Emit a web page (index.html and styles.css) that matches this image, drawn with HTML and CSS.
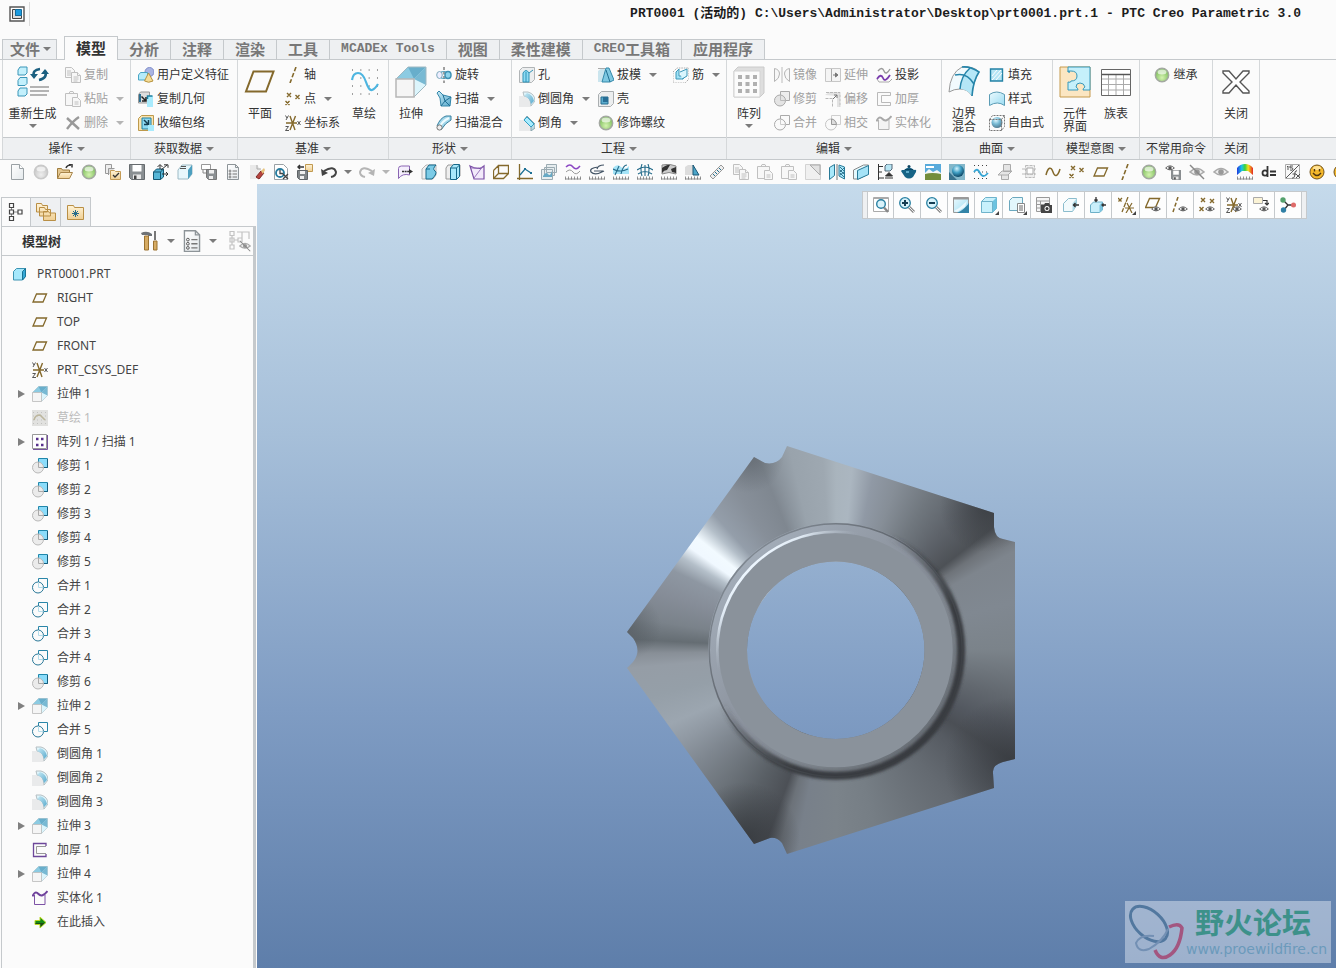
FILE: index.html
```html
<!DOCTYPE html>
<html lang="zh-CN">
<head>
<meta charset="utf-8">
<title>PRT0001 - PTC Creo Parametric 3.0</title>
<link rel="stylesheet" href="styles.css">
</head>
<body>
<svg class="sprite" aria-hidden="true">
<defs>
<linearGradient id="gBlue" x1="0" y1="0" x2="1" y2="1"><stop offset="0" stop-color="#ecfafe"/><stop offset="1" stop-color="#9bdcf2"/></linearGradient>
<linearGradient id="gDeep" x1="0" y1="0" x2="1" y2="1"><stop offset="0" stop-color="#c9ebf6"/><stop offset="1" stop-color="#5aaacd"/></linearGradient>
<linearGradient id="gGrey" x1="0" y1="0" x2="1" y2="1"><stop offset="0" stop-color="#fff"/><stop offset="1" stop-color="#e4e9ec"/></linearGradient>
<linearGradient id="gFold" x1="0" y1="0" x2="0" y2="1"><stop offset="0" stop-color="#fff3d6"/><stop offset="1" stop-color="#efcf94"/></linearGradient>
<linearGradient id="gRain" x1="0" y1="0" x2="1" y2="0"><stop offset="0" stop-color="#2036e0"/><stop offset=".3" stop-color="#19c8e6"/><stop offset=".5" stop-color="#3bd23b"/><stop offset=".7" stop-color="#f4e21d"/><stop offset="1" stop-color="#e32424"/></linearGradient>
<radialGradient id="gGreen" cx=".5" cy=".7" r=".6"><stop offset="0" stop-color="#d4f3b0"/><stop offset="1" stop-color="#7dbd5c"/></radialGradient>
<radialGradient id="gBall" cx=".5" cy=".7" r=".6"><stop offset="0" stop-color="#eee"/><stop offset="1" stop-color="#c6c6c6"/></radialGradient>
<radialGradient id="gSphere" cx=".4" cy=".3" r=".7"><stop offset="0" stop-color="#d5f3fd"/><stop offset=".5" stop-color="#3f9fc4"/><stop offset="1" stop-color="#0c4665"/></radialGradient>
</defs>
<symbol id="copy" viewBox="0 0 16 16"><g fill="#f7f7f7" stroke="#c0c0c0"><path d="M.5.5h6l3 3v7h-9z"/><path d="M2 4h4M2 6h4M2 8h4"/><path d="M6.500 5.500h6l3 3v7h-9z"/><path d="M12.500 5.500v3h3M8.500 10h5M8.500 12h5M8.500 14h4"/></g></symbol>
<symbol id="paste" viewBox="0 0 16 16"><g fill="#f7f7f7" stroke="#c0c0c0"><path d="M.5 2.500h12v12h-12z"/><path d="M4 2.500l1-2h3l1 2z"/><path d="M7.500 6.500h5l3 3v6h-8z"/><path d="M9.500 11h4M9.500 13h4"/></g></symbol>
<symbol id="cross" viewBox="0 0 16 16"><path d="M2 3l12 11M14 2C9 5 5 10 2 14" fill="none" stroke="#999" stroke-width="2.400"/></symbol>
<symbol id="udf" viewBox="0 0 16 16"><circle cx="11.500" cy="5" r="4.500" fill="#a9b4e2" stroke="#7f8cc9"/><path d="M.5 8l2-2.500h7V11l-2 2h-7z" fill="#b5ebfa" stroke="#4aa6c5"/><path d="M10.500 6L6.500 14q4 2.500 8.500 0z" fill="#f5dc98" stroke="#b6933f"/></symbol>
<symbol id="copygeo" viewBox="0 0 16 16"><path d="M.5 3.500l2-2.500h9v8l-2 3h-9z" fill="#ddd" stroke="#999"/><path d="M2 3v8" stroke="#2c6f90" stroke-width="2"/><path d="M3.500 5.500l4 4M8 6v4H4" fill="none" stroke="#222" stroke-width="1.500"/><path d="M9 5h6v11h-6z" fill="#a9ebfd"/><path d="M9.500 8V5h5" fill="none" stroke="#1c7fa0" stroke-width="1.500"/></symbol>
<symbol id="shrink" viewBox="0 0 16 16"><path d="M.5 3.500l3-3h12v12l-3 3h-12z" fill="#fae3b0" stroke="#bd9a4c"/><path d="M4 3h9v9l-2 2H4z" fill="#8edaf3" stroke="#2180a2"/><path d="M6 5l4 4M10.500 5v4.500H6" fill="none" stroke="#143c50" stroke-width="1.500"/><path d="M10 10h6v6h-6z" fill="#a9ebfd"/></symbol>
<symbol id="axis" viewBox="0 0 16 16"><path d="M11 0L5 16" stroke="#84692c" stroke-width="1.600" stroke-dasharray="4.500 2"/></symbol>
<symbol id="points" viewBox="0 0 16 16"><path d="M2 2l4 4M6 2L2 6M10.500 4l4 4M14.500 4l-4 4M.5 10l4 4M4.500 10l-4 4" stroke="#84692c" stroke-width="1.400"/></symbol>
<symbol id="csys" viewBox="0 0 16 16"><path d="M1 8h11M5 1l5 14M10.500 1L5 15" stroke="#84692c" stroke-width="1.400"/><path d="M.5 .500l1.500 2.500M3.500 .500L1 5M.5 11.500h3L.5 15.500H4M12.500 6l3 4M15.500 6l-3 4" fill="none" stroke="#444" stroke-width=".9"/></symbol>
<symbol id="plane" viewBox="0 0 16 16"><path d="M4.500 4h10L11 12H1z" fill="none" stroke="#84692c" stroke-width="1.300"/></symbol>
<symbol id="curve" viewBox="0 0 16 16"><path d="M1 11C3 3 6 2 8 8s5 4 7-3" fill="none" stroke="#84692c" stroke-width="1.500"/></symbol>
<symbol id="revolve" viewBox="0 0 16 16"><path d="M8 0v16" stroke="#444" stroke-dasharray="3 1.500"/><ellipse cx="3.500" cy="8" rx="2.800" ry="3.500" fill="#eef" stroke="#7eaabd"/><ellipse cx="12" cy="8" rx="3" ry="3.500" fill="#8ed4ec" stroke="#3d91b3" stroke-width="1.500"/><path d="M5 5q3-1 5 0M5 11q3 1 5 0" fill="none" stroke="#4a9dbb"/></symbol>
<symbol id="sweep" viewBox="0 0 16 16"><path d="M1 2l2-2 4 4 8 2-1 9H5L4 7z" fill="url(#gDeep)" stroke="#3386aa"/><path d="M7 4l2 6-4 5M9 10l6-4M9 10l5 5" fill="none" stroke="#1f6f94"/></symbol>
<symbol id="blend" viewBox="0 0 16 16"><path d="M1 11Q4 3 10 1l5 0v4Q9 8 5 15z" fill="#a3d8eb" stroke="#367f9f"/><path d="M3 13Q6 6 13 3" fill="none" stroke="#eefbff" stroke-width="2"/><circle cx="3.500" cy="12.500" r="2.600" fill="#eee" stroke="#777"/></symbol>
<symbol id="hole" viewBox="0 0 16 16"><path d="M.5 3.500l3-3h12v12l-3 3h-12z" fill="#eceeef" stroke="#b0b4b6"/><path d="M4 15V6q3-5 6 0v9z" fill="#8edaf3" stroke="#2e92b6"/><path d="M10 6l4-3M7 5v10" stroke="#2e92b6"/></symbol>
<symbol id="round" viewBox="0 0 16 16"><path d="M0 5h5q7 2 7 11H0z" fill="#e9eaeb"/><path d="M4 1h5q7 2 7 9l-4 5Q12 6 5 5z" fill="#dff5fc" stroke="#b5bfc3"/><path d="M8 2q6 2 7 8l-3 3Q11 7 5 5z" fill="url(#gDeep)"/></symbol>
<symbol id="chamfer" viewBox="0 0 16 16"><path d="M0 5h5l7 7v4H0z" fill="#e9eaeb"/><path d="M5 5l3-4 8 8v4l-4 3v-4z" fill="#b9dbe6" stroke="#8aa5ae"/><path d="M5 5l3-3 7 7-3 3z" fill="#a8ecff" stroke="#32a0c5"/></symbol>
<symbol id="draft" viewBox="0 0 16 16"><path d="M0 4l4-3h7v10l-3 4H0z" fill="#cbe5ee"/><path d="M0 1.500h7" stroke="#aaa"/><path d="M8 1l3 0 5 12-4 2H4z" fill="#7fc8e1" stroke="#3489aa"/><path d="M8 3l4 12" stroke="#246f91"/></symbol>
<symbol id="shell" viewBox="0 0 16 16"><path d="M.5 3.500l3-3h12v12l-3 3h-12z" fill="#eceeef" stroke="#aaaeb0"/><path d="M3 6h7v7H3z" fill="#5baccd" stroke="#266f91"/><path d="M5 6h5v5H5z" fill="#276e96"/></symbol>
<symbol id="rib" viewBox="0 0 16 16"><path d="M0 5l4-4h12v11l-4 4H0z" fill="none" stroke="#aaa" stroke-dasharray="1.500 1"/><path d="M3 5l3-3v7h7l-3 3H3z" fill="#9fe1f5" stroke="#3d97b8"/><path d="M7 5l7-3v7l-5 3" fill="#d8f5fd" stroke="#3d97b8"/></symbol>
<symbol id="green" viewBox="0 0 16 16"><circle cx="8" cy="8" r="6.700" fill="url(#gGreen)" stroke="#a3a8a1" stroke-width="1.400"/><ellipse cx="8" cy="5" rx="4.500" ry="2.500" fill="#fff" opacity=".65"/></symbol>
<symbol id="grey" viewBox="0 0 16 16"><circle cx="8" cy="8" r="6.700" fill="url(#gBall)" stroke="#c9c9c9" stroke-width="1.400"/><ellipse cx="8" cy="5" rx="4.500" ry="2.500" fill="#fff" opacity=".65"/></symbol>
<symbol id="mirror" viewBox="0 0 16 16"><path d="M.5 1.500q5 1 5 5.500t-5 7.500zM15.500 1.500q-5 1-5 5.500t5 7.500z" fill="#f7f7f7" stroke="#b5b5b5"/><path d="M8 0v16" stroke="#bbb"/></symbol>
<symbol id="trimoff" viewBox="0 0 16 16"><path d="M6.500.5h9v9h-9z" fill="#ededed" stroke="#aaa"/><circle cx="6" cy="9.500" r="5.500" fill="#e4e4e4" stroke="#aaa"/><path d="M6.500 4v5.500h5" fill="none" stroke="#bbb"/></symbol>
<symbol id="mergeoff" viewBox="0 0 16 16"><path d="M6.500.5h9v9h-9z" fill="#fafafa" stroke="#aaa"/><circle cx="6" cy="9.500" r="5.500" fill="#fafafa" stroke="#aaa"/><path d="M6.500 4v5.500h5" fill="none" stroke="#ccc"/></symbol>
<symbol id="interoff" viewBox="0 0 16 16"><path d="M6.500.5h9v9h-9z" fill="#fafafa" stroke="#cfcfcf"/><circle cx="6" cy="9.500" r="5.500" fill="#fafafa" stroke="#c4c4c4"/><path d="M6.500 4v5.500h5q-1-5-5-5.500z" fill="#ddd" stroke="#999"/></symbol>
<symbol id="extend" viewBox="0 0 16 16"><path d="M.5 1.500h15v13h-15z" fill="#f4f4f4" stroke="#c7c7c7"/><path d="M6.500 2v12" stroke="#aaa"/><path d="M8 8h4M10.500 6L13 8l-2.500 2z" fill="#777" stroke="#777"/></symbol>
<symbol id="offset" viewBox="0 0 16 16"><path d="M0 4l4-3h11v15h-3V5z" fill="#e3e3e3"/><path d="M.5 7.500h7V16M1 1.500h14V16" fill="none" stroke="#b8b8b8" stroke-dasharray="3 1"/><path d="M8 8l4-4M9 4h3v3" fill="none" stroke="#777"/></symbol>
<symbol id="thickoff" viewBox="0 0 16 16"><path d="M14.500 1.500h-13v13h13v-3h-9v-7h9z" fill="#fafafa" stroke="#b9b9b9"/></symbol>
<symbol id="thick" viewBox="0 0 16 16"><path d="M14 4.500H4.500v7H14" fill="none" stroke="#999"/><path d="M14 4V1.500H1.500v13H14V12" fill="none" stroke="#6d479a" stroke-width="1.300"/></symbol>
<symbol id="project" viewBox="0 0 16 16"><path d="M2 4q4-5 6 0t6-2" fill="none" stroke="#9a9a9a" stroke-width="1.400"/><path d="M1 12l2 3h10l3-3" fill="none" stroke="#aaa"/><path d="M1 12q4-6 6-1t7-3" fill="none" stroke="#7a3cae" stroke-width="1.800"/></symbol>
<symbol id="solidoff" viewBox="0 0 16 16"><path d="M2.500 5v9.500h10.500V5" fill="#f3f3f3" stroke="#b5b5b5"/><path d="M.5 6.500Q3 0 6.500 4t9-3" fill="none" stroke="#a8a8a8" stroke-width="2"/></symbol>
<symbol id="solid" viewBox="0 0 16 16"><path d="M2.500 5v9.500h10.500V5" fill="none" stroke="#7d52a6"/><path d="M.5 6.500Q3 0 6.500 4t9-3" fill="none" stroke="#6f429c" stroke-width="2"/></symbol>
<symbol id="fill" viewBox="0 0 16 16"><path d="M1.500 2h12v12h-12z" fill="#b5e5f5" stroke="#2583a6" stroke-width="1.400"/><path d="M3 9l5-6M3 13l9-10M7 13l6-7" stroke="#fff"/></symbol>
<symbol id="style" viewBox="0 0 16 16"><path d="M.5 3.500q7-5 15 0v11q-7-5-15 0z" fill="url(#gBlue)" stroke="#5b9cb5"/></symbol>
<symbol id="free" viewBox="0 0 16 16"><circle cx="8" cy="7.500" r="5.500" fill="url(#gSphere)" opacity=".7"/><path d="M.5 4.500l3-4h12v11l-3 4H.5zM.5 4.500h12v11M12.500 4.500l3-4" fill="none" stroke="#777" stroke-dasharray="2 1"/></symbol>
<symbol id="extrude" viewBox="0 0 32 32"><path d="M1 13L13 1h18v18L19 31" fill="#dcf5fc"/><path d="M1 13L13 1h18L19 13z" fill="#8ccbe2"/><path d="M13 1h18L19 13z" fill="#68aecb"/><path d="M19 13L31 1v18z" fill="#78b9d3"/><path d="M1 13L13 1h18v18L19 31" fill="none" stroke="#9fb9c3"/><path d="M1 13h18v18H1z" fill="#f5f5f5" stroke="#b6b6b6" stroke-width="1.500"/></symbol>
<symbol id="regen" viewBox="0 0 32 32"><g fill="#c3f0fc" stroke="#3a96b8"><path d="M1 4l2-3h7v6L8 9H1zM1 14.500l2-3h7v6L8 19.500H1zM1 25l2-3h7v6L8 30H1z"/></g><path d="M13 21h19M13 25h19M13 29h17" stroke="#9d9d9d" stroke-width="1.600"/><path d="M23 3Q15 4 17 10M22 14q9-2 6-9" fill="none" stroke="#1b5f80" stroke-width="2.600"/><path d="M13 8h8l-4 5zM24 8h8l-4-5z" fill="#1b5f80"/></symbol>
<symbol id="bigplane" viewBox="0 0 32 32"><path d="M9.500 5.500h20L22 25.500H2z" fill="none" stroke="#84692c" stroke-width="2"/></symbol>
<symbol id="sketch" viewBox="0 0 32 32"><path d="M4 4h26M4 28h26M4 12h26M4 20h26" stroke="#444" stroke-dasharray="1 7.330"/><path d="M4 14Q5 7 10 7t8 9 6 8 6-6" fill="none" stroke="#4db5e0" stroke-width="2.200"/></symbol>
<symbol id="pattern" viewBox="0 0 32 32"><path d="M1 5l4-4h26v26l-4 4H1z" fill="#dedede" stroke="#cacaca"/><path d="M1 5h26v26H1z" fill="#fbfbfb" stroke="#d3d3d3"/><path d="M5 11h19M5 18h19M5 25h19" stroke="#b0b0b0" stroke-width="4" stroke-dasharray="4 3.500"/></symbol>
<symbol id="boundary" viewBox="0 0 32 32"><path d="M1 26Q2 7 14 1q12-1 17 5-6 9-7 24-4-7-12-7-6 0-11 3z" fill="#f1fafd" stroke="#999"/><path d="M22 2q6 1 9 4-6 9-7 24-4-6-11-7Q13 10 22 2z" fill="#b5e7f7"/><path d="M14 1Q22 0 31 6q-6 9-7 24" fill="none" stroke="#2585aa" stroke-width="1.600"/><path d="M22 2Q13 10 12 23M7 9q12-3 19 9" fill="none" stroke="#2585aa" stroke-width="1.500"/></symbol>
<symbol id="component" viewBox="0 0 32 32"><path d="M1 1h30v30H1z" fill="#fbe6c2" stroke="#c59a4d"/><path d="M9 1h22v23h-7q0-2 2-3-1-4-5-4t-4 4q2 1 2 3H9v-8q3 1 3-1 6 0 6-5t-6-5-1 1H9z" fill="#c5f0fb" stroke="#3698bb"/></symbol>
<symbol id="table" viewBox="0 0 32 32"><path d="M1.500 3.500h29v26h-29z" fill="#fff" stroke="#666"/><path d="M2 13h28M2 18.500h28M2 24h28M8.500 9v20M16 9v20M23.500 9v20" stroke="#aaa"/><path d="M2 8.500h28" stroke="#555" stroke-width="1.500"/></symbol>
<symbol id="close" viewBox="0 0 32 32"><path d="M3 5h6l7 8 7-8h6v2l-9 9 9 9v2h-6l-7-8-7 8H3v-2l9-9-9-9z" fill="#fff" stroke="#555" stroke-width="1.400"/></symbol>
<symbol id="new" viewBox="0 0 16 16"><path d="M2.500.5h8l4 4v11h-12z" fill="url(#gGrey)" stroke="#9aa1a5"/><path d="M10.500.5v4h4" fill="#fff" stroke="#9aa1a5"/></symbol>
<symbol id="open" viewBox="0 0 16 16"><path d="M.5 14.500v-10h4l1 1.500h7v3" fill="#e3c68f" stroke="#9e7b3c"/><path d="M.5 14.500l3-6h12l-3 6z" fill="url(#gFold)" stroke="#a8854a"/><path d="M9 4q1-3 5-3M12 0h3v3.500" fill="none" stroke="#333" stroke-width="1.500"/></symbol>
<symbol id="folders" viewBox="0 0 16 16"><path d="M.5.5h6v9h-6z" fill="#eee" stroke="#999"/><path d="M3.500 11V4.500h6" fill="#ddd" stroke="#999"/><path d="M5.500 15.500v-9h4l1 1h5v8z" fill="url(#gFold)" stroke="#c49b55"/><path d="M8 11l2 2 4-4" fill="none" stroke="#333" stroke-width="1.300"/></symbol>
<symbol id="save" viewBox="0 0 16 16"><path d="M.5.5h15v15h-13l-2-2z" fill="#8a8f92" stroke="#666b6e"/><path d="M3.500 1h9v6.500h-9z" fill="#fff"/><path d="M4 10.500h8V15H4z" fill="#e8e8e8"/><path d="M5 11.500h2.500V15H5z" fill="#444"/></symbol>
<symbol id="movebox" viewBox="0 0 16 16"><path d="M.5 8l3-3h7v8l-3 2.500h-7z" fill="#56b6d6" stroke="#145772"/><path d="M.5 8h7v7.500M7.500 8l3-3" fill="none" stroke="#145772"/><path d="M7 5V1M4.500 3L7 .5 9.500 3M8 6l6-5M11 .8h4v3M9 10h6M13 8l2 2-2 2" fill="none" stroke="#333"/></symbol>
<symbol id="mesh" viewBox="0 0 16 16"><path d="M1 6l4-5h10v9l-4 5H1z" fill="#e7f7fc" stroke="#9dbac5"/><path d="M11 6l4-5v9l-4 5z" fill="#4c9fbf"/><path d="M3 4l1 1 1-1 1 1 1-1 1 1 1-1M4 2l1 1 1-1 1 1 1-1 1 1" fill="none" stroke="#555"/></symbol>
<symbol id="savecopy" viewBox="0 0 16 16"><path d="M.5.5h9v5h-9z" fill="#fff" stroke="#999"/><path d="M2 6v3h3" fill="none" stroke="#888"/><path d="M5.500 5.500h10v10h-8l-2-2z" fill="#8b8f92" stroke="#777"/><path d="M8 6h5v3.500H8zM8 12h4v3H8z" fill="#eee"/></symbol>
<symbol id="list" viewBox="0 0 16 16"><path d="M2.500.5h8l3 3v12h-11z" fill="url(#gGrey)" stroke="#8d9498"/><path d="M10.500.5v3h3" fill="none" stroke="#8d9498"/><g fill="none" stroke="#555" stroke-width=".7"><circle cx="5" cy="7" r="1"/><circle cx="5" cy="10" r="1"/><circle cx="5" cy="13" r="1"/></g><path d="M7.500 7H12M7.500 10H12M7.500 13H12" stroke="#777"/></symbol>
<symbol id="erase" viewBox="0 0 16 16"><path d="M1 1h7l4 5v9H1z" fill="#e9e9e9"/><path d="M8 1v4h4" fill="none" stroke="#aaa"/><path d="M7 13l5-6 3 2-5 6z" fill="#b8443e" stroke="#7c2926"/><path d="M12 7l3-3 1 2-2 4z" fill="#e8c47e"/></symbol>
<symbol id="preview" viewBox="0 0 16 16"><path d="M1.500.5h9l4 4v11h-13z" fill="#fff" stroke="#9aa1a5"/><circle cx="7" cy="9" r="4" fill="none" stroke="#267c9f" stroke-width="1.800"/><path d="M7 6v3.500h3M10 10l5 5M15 10l-5 5" fill="none" stroke="#444" stroke-width="1.300"/></symbol>
<symbol id="backup" viewBox="0 0 16 16"><path d="M1 3h6M3 1L1 3l2 2" fill="none" stroke="#333" stroke-width="1.500"/><path d="M8.500.5h7v7h-7z" fill="url(#gFold)" stroke="#c19a50"/><path d="M.5 6.500h10v9h-8l-2-2z" fill="#7f8487" stroke="#5e6366"/><path d="M3 7h5v3H3zM3 12h4v3H3z" fill="#eee"/></symbol>
<symbol id="undo" viewBox="0 0 16 16"><path d="M3 7q10-6 12 1 0 4-5 5" fill="none" stroke="#444" stroke-width="2"/><path d="M0 5l1 7 6-3z" fill="#444"/></symbol>
<symbol id="redo" viewBox="0 0 16 16"><path d="M13 7Q3 1 1 8q0 4 5 5" fill="none" stroke="#b5b5b5" stroke-width="2"/><path d="M16 5l-1 7-6-3z" fill="#b5b5b5"/></symbol>
<symbol id="sheet" viewBox="0 0 16 16"><path d="M1.500 14.500v-10q0-2.500 3-2.500h8v9q-7-2-11 3.500z" fill="#f4eefc" stroke="#8a65b3"/><path d="M5 7.500h8" stroke="#333" stroke-width="1.600" stroke-dasharray="2 .6"/><path d="M12 5l4 2.500-4 2.500z" fill="#333"/></symbol>
<symbol id="cut" viewBox="0 0 16 16"><path d="M1 5l4-4h10v10l-3 4H1z" fill="#f0f0f0" stroke="#b5b5b5"/><path d="M5 5l3-4h7q-4 4-1 6t-3 8H5V5h4" fill="#7ccbe6" stroke="#17698a"/></symbol>
<symbol id="slab" viewBox="0 0 16 16"><path d="M1 4l2-3h12v11l-3 3H1z" fill="#eee" stroke="#999"/><path d="M5.500 4l3-3.500h6v12l-3 3h-6z" fill="#a9e9fb" stroke="#17698a"/><path d="M5.500 4h6v11.500M11.500 4l3-3" fill="none" stroke="#17698a"/></symbol>
<symbol id="purple" viewBox="0 0 16 16"><path d="M1 2q9 5 14 0v13H5z" fill="#f2eafa" stroke="#7a4fa5" stroke-width="1.200"/><path d="M14 2L5 14M2 4l8 0" stroke="#9a76bd"/></symbol>
<symbol id="frame" viewBox="0 0 16 16"><path d="M5.500 1.500h10v8h-10zM.5 6.500l5-5M.5 6.500v8h10l5-5M.5 14.500l5-5" fill="none" stroke="#84692c" stroke-width="1.300"/></symbol>
<symbol id="graph" viewBox="0 0 16 16"><path d="M2.500 0v16M0 14.500h16" stroke="#84692c" stroke-width="1.300"/><path d="M3 11l5-6 6 4" fill="none" stroke="#1c6f94" stroke-width="1.300"/><path d="M7 4h2v2H7zM13 8h2v2h-2z" fill="#1c6f94"/></symbol>
<symbol id="stack" viewBox="0 0 16 16"><path d="M5.500.5h10v8h-10zM3.500 3.500h10v8h-10zM.5 5.500h11v10H.5z" fill="#e6edef" stroke="#9babb2"/><path d="M2 12q3-5 5-2t4-3v6H2z" fill="#67a9c4"/></symbol>
<symbol id="ruler" viewBox="0 0 16 16"><path d="M0 15h16M.5 12.500v3M3.500 12.500v3M6.500 12.500v3M9.500 12.500v3M12.500 12.500v3M15.500 12.500v3" stroke="#777" stroke-width=".8"/></symbol>
<symbol id="wave" viewBox="0 0 16 16"><use href="#ruler"/><path d="M1 3q4-4 7 0t7-1" fill="none" stroke="#8c48c4" stroke-width="1.500"/><path d="M1 8q4-4 7 0t7-1" fill="none" stroke="#999"/></symbol>
<symbol id="radius" viewBox="0 0 16 16"><use href="#ruler"/><path d="M15 1q-6 0-7 4M9 3Q0 4 2 8q4 4 13-1M5 7h9" fill="none" stroke="#456" stroke-width="1.200"/></symbol>
<symbol id="flow" viewBox="0 0 16 16"><use href="#ruler"/><path d="M0 4q4-5 8-1t8-1v8H0z" fill="#a6e4f7"/><path d="M2 11L6 2M8 10q2-9 6-9M0 5q7 4 15 0" fill="none" stroke="#256c8b" stroke-width="1.100"/></symbol>
<symbol id="net" viewBox="0 0 16 16"><use href="#ruler"/><path d="M0 6q8-6 16 0M1 10q7-5 14 0M5 0q-2 5 0 12M11 0q2 5 0 12M8 1v11" fill="none" stroke="#256c8b" stroke-width="1.100"/></symbol>
<symbol id="zebra" viewBox="0 0 16 16"><use href="#ruler"/><path d="M1 1q7-2 14 1v8q-7-3-14 0z" fill="#ccc" stroke="#888"/><path d="M1 4q6-4 8-3L6 6q-3 0-5 3zM10 5l5-2v6l-4-1z" fill="#333"/></symbol>
<symbol id="draftchk" viewBox="0 0 16 16"><use href="#ruler"/><path d="M0 3l3-2h6v10H0z" fill="#ddd"/><path d="M8 11V1l6 10z" fill="#4ca6ca" stroke="#1b5675"/></symbol>
<symbol id="measure" viewBox="0 0 16 16"><path d="M1 12L12 1l3 3L4 15z" fill="#eee" stroke="#999"/><path d="M4 10l2 2M6 8l2 2M8 6l2 2M10 4l2 2" stroke="#25708f"/></symbol>
<symbol id="corner" viewBox="0 0 16 16"><path d="M.5.5h15v15H.5z" fill="#f0f0f0" stroke="#d3d3d3"/><path d="M5 1l10 10V1z" fill="#e2e2e2" stroke="#aaa"/></symbol>
<symbol id="mirror2" viewBox="0 0 16 16"><path d="M.5 3.500l5-3v11l-5 4zM10 1l5.500 2v12L10 12z" fill="#a9e9fb" stroke="#287997"/><path d="M8 0v16" stroke="#777"/><path d="M11 3l4 4M11 6l4 4M11 9l4 4M15 4l-4 4M15 8l-4 3" stroke="#175b79" stroke-width=".8"/></symbol>
<symbol id="thinbox" viewBox="0 0 16 16"><path d="M.5 6l10-5h5v9l-10 5h-5z" fill="#e4f8fd" stroke="#888"/><path d="M4.500 6.500l11-5v9l-11 5z" fill="#a5e3f7" stroke="#287997"/></symbol>
<symbol id="levels" viewBox="0 0 16 16"><path d="M1.500 0v16M1 2.500h5M1 8h4M1 14h6" stroke="#333"/><path d="M8 2l2-2h5v5l-2 2H8z" fill="#b7e5f3" stroke="#567"/><path d="M12 8.500l3.500 3.500h-7zM8 14h8" fill="#333" stroke="#333"/></symbol>
<symbol id="teapot" viewBox="0 0 16 16"><path d="M3 6q5-5 10 0 3-1 2 2l-3 5q-4 3-8 0L0 7l1-1z" fill="#176486"/><circle cx="8" cy="2.500" r="1.500" fill="#0d4562"/><path d="M4 5.500h8" stroke="#0d4562"/><path d="M5 8h3" stroke="#78c3df" stroke-width="1.500"/></symbol>
<symbol id="scene" viewBox="0 0 16 16"><path d="M0 0h16v16H0z" fill="#58aadb"/><path d="M0 9l4-4 4 3 4-2 4 3v3H0z" fill="#f3f7f6"/><path d="M0 10q7-2 16 0v6H0z" fill="#738d3b"/><path d="M1 3h8" stroke="#fff" stroke-width="2"/></symbol>
<symbol id="sphere" viewBox="0 0 16 16"><path d="M0 0h16v16H0z" fill="#83b7ca"/><path d="M0 8l8 8H0z" fill="#39728d"/><circle cx="9" cy="7" r="6" fill="url(#gSphere)"/></symbol>
<symbol id="sketchs" viewBox="0 0 16 16"><path d="M1 1.500h15M1 14.500h15M1 8h15" stroke="#444" stroke-dasharray="1 3"/><path d="M1 8q3-5 6 1t8 0" fill="none" stroke="#38a6d4" stroke-width="1.800"/></symbol>
<symbol id="section" viewBox="0 0 16 16"><path d="M6.500.5h7v7h-7zM1 11l4-4h10l-4 4zM4.500 11v4.500h7v-5" fill="#e5e5e5" stroke="#aaa"/></symbol>
<symbol id="clip" viewBox="0 0 16 16"><path d="M4.500 1.500h9v12h-9zM1 5h14M1 10h14" fill="#eee" stroke="#bbb" stroke-dasharray="3 1"/><path d="M6 4h6v6H6z" fill="#fff" stroke="#aaa"/></symbol>
<symbol id="eye" viewBox="0 0 16 16"><path d="M1 8q7-7 14 0-7 6-14 0z" fill="#fff" stroke="#666" stroke-width="1.600"/><circle cx="8" cy="8" r="2.800" fill="#555"/></symbol>
<symbol id="eyeg" viewBox="0 0 16 16"><path d="M1 8q7-7 14 0-7 6-14 0z" fill="#eee" stroke="#aaa" stroke-width="1.600"/><circle cx="8" cy="8" r="2.800" fill="#999"/></symbol>
<symbol id="eyeoff" viewBox="0 0 16 16"><use href="#eyeg"/><path d="M1 1l14 14" stroke="#888" stroke-width="1.400"/></symbol>
<symbol id="eyesave" viewBox="0 0 16 16"><use href="#save" x="6" y="6" width="10" height="10"/><use href="#eye" x="0" y="-1" width="10" height="10"/></symbol>
<symbol id="rainbow" viewBox="0 0 16 16"><path d="M0 11V4q3-4 8-4t8 4v7l-5-4H5z" fill="url(#gRain)"/><use href="#ruler"/></symbol>
<symbol id="relation" viewBox="0 0 16 16"><path d="M6.500 2v11M6.500 9a2.500 2.700 0 1 0-5 0 2.500 2.700 0 1 0 5 0M9 7.500h6M9 11h6" fill="none" stroke="#333" stroke-width="1.800"/></symbol>
<symbol id="fx" viewBox="0 0 16 16"><path d="M.5.5h14v14H.5z" fill="#f8f8f8" stroke="#aaa"/><path d="M14 1L1 14M2 3l1-1v4M8 2H5v2q3-1 3 1T5 6M7 14q3 1 3-6 1-2 2-1M7.500 10H11M11 10l4 4M15 10l-4 4" fill="none" stroke="#444" stroke-width=".9"/></symbol>
<symbol id="smile" viewBox="0 0 16 16"><circle cx="8" cy="8" r="7" fill="#f4b82b" stroke="#71521b"/><ellipse cx="8" cy="4" rx="4" ry="2" fill="#ffe294"/><path d="M5.500 5v2.500M10.500 5v2.500M4 9q4 5 8 0" fill="none" stroke="#503710" stroke-width="1.400"/></symbol>
<symbol id="part" viewBox="0 0 16 16"><path d="M1.500 5.500l3-3h9v8l-3 3.500h-9z" fill="#a5e8fc" stroke="#3c93b2"/><path d="M10.500 5.500l3-3v8l-3 3.500z" fill="#35a8d6" stroke="#187497"/></symbol>
<symbol id="sketchhid" viewBox="0 0 16 16"><path d="M0 0h16v16H0z" fill="#e1e1df"/><path d="M1 2.500h15M1 6h15M1 10h15M1 13.500h15" stroke="#c1c1bf" stroke-dasharray="1 3"/><path d="M2 10Q3 5 8 5l5 5" fill="none" stroke="#bcb69d" stroke-width="1.600"/></symbol>
<symbol id="patt" viewBox="0 0 16 16"><path d="M.5.5h14v14H.5z" fill="#fff" stroke="#999"/><path d="M15.500 1v14.500H1" fill="none" stroke="#77549d"/><path d="M4 5h7.500M4 11h7.500" stroke="#57308c" stroke-width="2.500" stroke-dasharray="2.500 2.500"/></symbol>
<symbol id="trim" viewBox="0 0 16 16"><path d="M6.500.5h9v9h-9z" fill="#8bdcfa" stroke="#2088ac"/><path d="M15.500 1v8.500H12" fill="none" stroke="#165d7c"/><circle cx="6" cy="9.500" r="5.500" fill="#ebebeb" stroke="#b9b9b9"/><path d="M6.500 4v5.500h5" fill="none" stroke="#aaa"/></symbol>
<symbol id="merge" viewBox="0 0 16 16"><path d="M6.500.5h9v9h-9z" fill="#fbfbfb" stroke="#2a86a8"/><circle cx="6" cy="9.500" r="5.500" fill="#fbfbfb" stroke="#2a7898"/><path d="M6.500 4v5.500h5" fill="none" stroke="#b4dcea"/></symbol>
<symbol id="insert" viewBox="0 0 16 16"><path d="M3 6.500h5V3l6 5.500L8 14v-3.500H3z" fill="#168b16" stroke="#b8d820"/><path d="M3.500 9h9L8.500 13v-3h-5z" fill="#1f4a14"/></symbol>
<symbol id="nodes" viewBox="0 0 16 22"><path d="M3.500 3v16M4 11h7" stroke="#888"/><path d="M1.500 2.500h4v4h-4zM1.500 9h4v4h-4zM1.500 15.500h4v4h-4zM10 9h4v4h-4z" fill="#fff" stroke="#444" stroke-width="1.200"/></symbol>
<symbol id="nodesoff" viewBox="0 0 22 22"><path d="M1 1.500h4v4H1zM1 8h4v4H1zM1 15h4v4H1zM9 8h4v4H9zM3 5v10M5 10h4M8 2h12v7M13 2v6" fill="none" stroke="#c3c3c3" stroke-width="1.200"/><use href="#eyeoff" x="10" y="10" width="12" height="12"/></symbol>
<symbol id="layers" viewBox="0 0 22 22"><g fill="url(#gFold)" stroke="#b98f45"><path d="M1.500 11V2.500h5l1 2h5V11zM4.500 15V6.500h5l1 2h5V15zM8.500 19.500v-9h5l1 1.500h6v7.500z"/></g></symbol>
<symbol id="star" viewBox="0 0 22 22"><path d="M2.500 18.500v-14h6l1 2h9v12z" fill="url(#gFold)" stroke="#b98f45"/><path d="M10.500 9v7M7 12.500h7M8 10l5 5M13 10l-5 5" stroke="#276c8a"/></symbol>
<symbol id="tools" viewBox="0 0 22 22"><path d="M2 3q6-3 11 1v2H9V5H3z" fill="#6e7276"/><path d="M5.500 6h4v14h-4z" fill="#d6ab63" stroke="#9b7230"/><path d="M16 1v9" stroke="#777" stroke-width="2"/><path d="M14.500 11h3.500v9h-3.500z" fill="#d6ab63" stroke="#9b7230"/></symbol>
<symbol id="zoomfit" viewBox="0 0 16 16"><path d="M.5.500h15v14H.5z" fill="#fff" stroke="#aaa"/><path d="M1 1.500h14" stroke="#aaa"/><circle cx="8" cy="7" r="4.300" fill="#d9f3fb" stroke="#2980a2" stroke-width="1.400"/><path d="M11 10.500l4 4.500" stroke="#888" stroke-width="2.400"/></symbol>
<symbol id="zoomin" viewBox="0 0 16 16"><circle cx="6" cy="6" r="5.300" fill="#d9f3fb" stroke="#2980a2" stroke-width="1.300"/><path d="M6 3v6M3 6h6" stroke="#143d53" stroke-width="2"/><path d="M10 10l5 5" stroke="#888" stroke-width="3"/><path d="M10 10l5 5" stroke="#eee"/></symbol>
<symbol id="zoomout" viewBox="0 0 16 16"><circle cx="6" cy="6" r="5.300" fill="#d9f3fb" stroke="#2980a2" stroke-width="1.300"/><path d="M3 6h6" stroke="#143d53" stroke-width="2"/><path d="M10 10l5 5" stroke="#888" stroke-width="3"/><path d="M10 10l5 5" stroke="#eee"/></symbol>
<symbol id="repaint" viewBox="0 0 16 16"><path d="M.5.5h15v15H.5z" fill="url(#gBlue)" stroke="#999"/><path d="M16 6v10H4q7-3 12-10z" fill="#3384a7"/><path d="M1 1.500h14" stroke="#999" stroke-width="2"/><path d="M1 14l5-3 8-7-2 6-8 5z" fill="#fff" opacity=".7"/></symbol>
<symbol id="shade" viewBox="0 0 16 16"><path d="M.5 4.500l4-4h11v11l-4 4H.5z" fill="#c8f1fc" stroke="#6fb3cb"/><path d="M11.500 4.500l4-4v11l-4 4z" fill="#6cc3e0"/><path d="M.5 4.500h11v11" fill="none" stroke="#6fb3cb"/></symbol>
<symbol id="views" viewBox="0 0 16 16"><path d="M.5 3.500l3-3h10v10l-3 3H.5z" fill="#e3f7fc" stroke="#6ba8be"/><path d="M8.500 6.500h7v9h-7z" fill="#fff" stroke="#888"/><path d="M10 9h4M10 11h4M10 13h4" stroke="#666"/></symbol>
<symbol id="camera" viewBox="0 0 16 16"><path d="M.5.5h13v14H.5zM1 4h12M1 7.500h12M1 11h12M4.500 4v10" fill="#f6f6f6" stroke="#999"/><path d="M5 8h3l1-2h4l1 2h2v8H5z" fill="#444"/><circle cx="11" cy="11.500" r="2.500" fill="#fff"/><circle cx="11" cy="11.500" r="1.500" fill="#333"/></symbol>
<symbol id="persp" viewBox="0 0 16 16"><path d="M.5 6.500l5-5h8v7l-4 6h-9z" fill="#f2fafc" stroke="#8bbccd"/><path d="M9.500 6.500v8l4-6v-7z" fill="#b2dce8"/><path d="M10 8h6M12.500 6L10.500 8l2 2" fill="none" stroke="#333" stroke-width="1.400"/></symbol>
<symbol id="ortho" viewBox="0 0 16 16"><path d="M.5 8l3-3h9v8l-3 2.500h-9z" fill="#c9effb" stroke="#6db0c8"/><path d="M9.500 8l3-3v8l-3 2.500z" fill="#7cc4de"/><path d="M6 0v4M4.500 2.500L6 4.500l1.500-2M16 8h-4M13.500 6.500L12 8l1.500 1.500" fill="none" stroke="#333" stroke-width="1.300"/></symbol>
<symbol id="datum" viewBox="0 0 16 16"><path d="M0 1l4 4M4 1L0 5M10 0L4 15" stroke="#84692c" stroke-width="1.300" stroke-dasharray="5 1"/><path d="M7 11h9M9 6l5 10M14 6L8 16" stroke="#84692c" stroke-width="1.200"/></symbol>
<symbol id="planeeye" viewBox="0 0 16 16"><path d="M4.500 1.500h10l-4 9H.5z" fill="none" stroke="#84692c" stroke-width="1.400"/><use href="#eye" x="6" y="7" width="10" height="10"/></symbol>
<symbol id="axiseye" viewBox="0 0 16 16"><path d="M6 0L1 15" stroke="#84692c" stroke-width="1.500" stroke-dasharray="4 2"/><use href="#eye" x="6" y="7" width="10" height="10"/></symbol>
<symbol id="pointseye" viewBox="0 0 16 16"><path d="M2 1l4 4M6 1L2 5M11 2l4 4M15 2l-4 4M.5 10l4 4M4.500 10l-4 4" stroke="#84692c" stroke-width="1.400"/><use href="#eye" x="6" y="7" width="10" height="10"/></symbol>
<symbol id="csyseye" viewBox="0 0 16 16"><use href="#csys"/><use href="#eye" x="6" y="7" width="10" height="10"/></symbol>
<symbol id="noteeye" viewBox="0 0 16 16"><path d="M.5.500h9v6h-9z" fill="#fbf3d5" stroke="#aaa"/><path d="M10 3.500h4V8M12 6l2 2 2-2" fill="none" stroke="#333" stroke-width="1.200"/><use href="#eye" x="6" y="7" width="10" height="10"/></symbol>
<symbol id="spin" viewBox="0 0 16 16"><path d="M3 3l5 5 5 0M8 8l-4 5" fill="none" stroke="#333" stroke-width="1.300"/><circle cx="3" cy="3" r="2.700" fill="#55a16c"/><circle cx="13.500" cy="8" r="2.500" fill="#de6b69"/><circle cx="3.500" cy="13" r="2.700" fill="#2f7fa5"/></symbol>
</svg>

<header class="titlebar">
  <svg class="app-icon" viewBox="0 0 16 16"><path d="M1 1h14v14H1z" fill="#fff" stroke="#555" stroke-width="1.400"/><path d="M3.500 3.500h3v6h6v3h-9z" fill="#ddd" stroke="#444"/><path d="M6.500 3.500h6v6h-6z" fill="#1a9be0" stroke="#176b99"/></svg>
  <span class="title-sep"></span>
  <h1>PRT0001 (活动的) C:\Users\Administrator\Desktop\prt0001.prt.1 - PTC Creo Parametric 3.0</h1>
</header>

<nav class="tabs">
  <button class="tab file">文件<i class="caret"></i></button>
  <button class="tab active">模型</button><button class="tab">分析</button><button class="tab">注释</button><button class="tab">渲染</button><button class="tab">工具</button><button class="tab"><span class="latin">MCADEx Tools</span></button><button class="tab">视图</button><button class="tab">柔性建模</button><button class="tab"><span class="latin">CREO</span>工具箱</button><button class="tab">应用程序</button>
</nav>

<div class="ribbon">
  <section class="group g-ops"><div class="body">
    <button class="big wide"><svg><use href="#regen"/></svg><span>重新生成</span><i class="caret"></i></button>
    <div class="col">
      <button class="cmd off" disabled><svg><use href="#copy"/></svg>复制</button>
      <button class="cmd off" disabled><svg><use href="#paste"/></svg>粘贴<i class="caret"></i></button>
      <button class="cmd off" disabled><svg><use href="#cross"/></svg>删除<i class="caret"></i></button>
    </div></div><button class="foot">操作<i class="caret"></i></button></section>
  <section class="group g-data"><div class="body lead">
    <div class="col">
      <button class="cmd"><svg><use href="#udf"/></svg>用户定义特征</button>
      <button class="cmd"><svg><use href="#copygeo"/></svg>复制几何</button>
      <button class="cmd"><svg><use href="#shrink"/></svg>收缩包络</button>
    </div></div><button class="foot">获取数据<i class="caret"></i></button></section>
  <section class="group g-datum"><div class="body">
    <button class="big"><svg><use href="#bigplane"/></svg><span>平面</span></button>
    <div class="col">
      <button class="cmd"><svg><use href="#axis"/></svg>轴</button>
      <button class="cmd"><svg><use href="#points"/></svg>点<i class="caret"></i></button>
      <button class="cmd"><svg><use href="#csys"/></svg>坐标系</button>
    </div>
    <button class="big"><svg><use href="#sketch"/></svg><span>草绘</span></button>
    </div><button class="foot">基准<i class="caret"></i></button></section>
  <section class="group g-shape"><div class="body">
    <button class="big"><svg><use href="#extrude"/></svg><span>拉伸</span></button>
    <div class="col">
      <button class="cmd"><svg><use href="#revolve"/></svg>旋转</button>
      <button class="cmd"><svg><use href="#sweep"/></svg>扫描<i class="caret"></i></button>
      <button class="cmd"><svg><use href="#blend"/></svg>扫描混合</button>
    </div></div><button class="foot">形状<i class="caret"></i></button></section>
  <section class="group g-eng"><div class="body lead">
    <div class="col">
      <button class="cmd"><svg><use href="#hole"/></svg>孔</button>
      <button class="cmd"><svg><use href="#round"/></svg>倒圆角<i class="caret"></i></button>
      <button class="cmd"><svg><use href="#chamfer"/></svg>倒角<i class="caret"></i></button>
    </div>
    <div class="col">
      <button class="cmd"><svg><use href="#draft"/></svg>拔模<i class="caret"></i></button>
      <button class="cmd"><svg><use href="#shell"/></svg>壳</button>
      <button class="cmd"><svg><use href="#green"/></svg>修饰螺纹</button>
    </div>
    <div class="col">
      <button class="cmd"><svg><use href="#rib"/></svg>筋<i class="caret"></i></button>
    </div></div><button class="foot">工程<i class="caret"></i></button></section>
  <section class="group g-edit"><div class="body">
    <button class="big"><svg><use href="#pattern"/></svg><span>阵列</span><i class="caret"></i></button>
    <div class="col">
      <button class="cmd off" disabled><svg><use href="#mirror"/></svg>镜像</button>
      <button class="cmd off" disabled><svg><use href="#trimoff"/></svg>修剪</button>
      <button class="cmd off" disabled><svg><use href="#mergeoff"/></svg>合并</button>
    </div>
    <div class="col">
      <button class="cmd off" disabled><svg><use href="#extend"/></svg>延伸</button>
      <button class="cmd off" disabled><svg><use href="#offset"/></svg>偏移</button>
      <button class="cmd off" disabled><svg><use href="#interoff"/></svg>相交</button>
    </div>
    <div class="col">
      <button class="cmd"><svg><use href="#project"/></svg>投影</button>
      <button class="cmd off" disabled><svg><use href="#thickoff"/></svg>加厚</button>
      <button class="cmd off" disabled><svg><use href="#solidoff"/></svg>实体化</button>
    </div></div><button class="foot">编辑<i class="caret"></i></button></section>
  <section class="group g-surf"><div class="body">
    <button class="big"><svg><use href="#boundary"/></svg><span>边界<br>混合</span></button>
    <div class="col">
      <button class="cmd"><svg><use href="#fill"/></svg>填充</button>
      <button class="cmd"><svg><use href="#style"/></svg>样式</button>
      <button class="cmd"><svg><use href="#free"/></svg>自由式</button>
    </div></div><button class="foot">曲面<i class="caret"></i></button></section>
  <section class="group g-intent"><div class="body">
    <button class="big"><svg><use href="#component"/></svg><span>元件<br>界面</span></button>
    <button class="big slim"><svg><use href="#table"/></svg><span>族表</span></button>
    </div><button class="foot">模型意图<i class="caret"></i></button></section>
  <section class="group g-rare"><div class="body center">
    <div class="col"><button class="cmd"><svg><use href="#green"/></svg>继承</button></div>
    </div><button class="foot">不常用命令</button></section>
  <section class="group g-close"><div class="body center">
    <button class="big"><svg><use href="#close"/></svg><span>关闭</span></button>
    </div><button class="foot">关闭</button></section>
  <div class="group rest"><div class="body"></div><div class="foot"></div></div>
</div>

<div class="quick">
  <button aria-label="新建"><svg><use href="#new"/></svg></button><button aria-label="会话"><svg><use href="#grey"/></svg></button><button aria-label="打开"><svg><use href="#open"/></svg></button><button aria-label="运行"><svg><use href="#green"/></svg></button><button aria-label="工作目录"><svg><use href="#folders"/></svg></button><button aria-label="保存"><svg><use href="#save"/></svg></button><button aria-label="移动"><svg><use href="#movebox"/></svg></button><button aria-label="网格"><svg><use href="#mesh"/></svg></button><button aria-label="另存为"><svg><use href="#savecopy"/></svg></button><button aria-label="列表"><svg><use href="#list"/></svg></button><button aria-label="拭除"><svg><use href="#erase"/></svg></button><button aria-label="预览"><svg><use href="#preview"/></svg></button><button aria-label="备份"><svg><use href="#backup"/></svg></button><button aria-label="撤消"><svg><use href="#undo"/></svg></button><button class="drop" aria-label="撤消列表"><i class="caret"></i></button><button aria-label="重做"><svg><use href="#redo"/></svg></button><button class="drop off" aria-label="重做列表"><i class="caret"></i></button><button aria-label="曲面"><svg><use href="#sheet"/></svg></button><button aria-label="切口"><svg><use href="#cut"/></svg></button><button aria-label="伸出项"><svg><use href="#slab"/></svg></button><button aria-label="边界"><svg><use href="#purple"/></svg></button><button aria-label="框架"><svg><use href="#frame"/></svg></button><button aria-label="图形"><svg><use href="#graph"/></svg></button><button aria-label="图像"><svg><use href="#stack"/></svg></button><button aria-label="曲率"><svg><use href="#wave"/></svg></button><button aria-label="半径"><svg><use href="#radius"/></svg></button><button aria-label="流线"><svg><use href="#flow"/></svg></button><button aria-label="网格分析"><svg><use href="#net"/></svg></button><button aria-label="反射"><svg><use href="#zebra"/></svg></button><button aria-label="拔模分析"><svg><use href="#draftchk"/></svg></button><button aria-label="测量"><svg><use href="#measure"/></svg></button><button aria-label="复制"><svg><use href="#copy"/></svg></button><button aria-label="粘贴"><svg><use href="#paste"/></svg></button><button aria-label="选择性粘贴"><svg><use href="#paste"/></svg></button><button aria-label="拐角"><svg><use href="#corner"/></svg></button><button aria-label="镜像"><svg><use href="#mirror2"/></svg></button><button aria-label="薄板"><svg><use href="#thinbox"/></svg></button><button aria-label="层级"><svg><use href="#levels"/></svg></button><button aria-label="渲染"><svg><use href="#teapot"/></svg></button><button aria-label="场景"><svg><use href="#scene"/></svg></button><button aria-label="外观"><svg><use href="#sphere"/></svg></button><button aria-label="草绘"><svg><use href="#sketchs"/></svg></button><button aria-label="截面"><svg><use href="#section"/></svg></button><button aria-label="剪裁"><svg><use href="#clip"/></svg></button><button aria-label="曲线"><svg><use href="#curve"/></svg></button><button aria-label="点"><svg><use href="#points"/></svg></button><button aria-label="平面"><svg><use href="#plane"/></svg></button><button aria-label="轴"><svg><use href="#axis"/></svg></button><button aria-label="继承"><svg><use href="#green"/></svg></button><button aria-label="保存状态"><svg><use href="#eyesave"/></svg></button><button aria-label="隐藏"><svg><use href="#eyeoff"/></svg></button><button aria-label="显示"><svg><use href="#eyeg"/></svg></button><button aria-label="着色"><svg><use href="#rainbow"/></svg></button><button aria-label="关系"><svg><use href="#relation"/></svg></button><button aria-label="参数"><svg><use href="#fx"/></svg></button><button aria-label="反馈"><svg><use href="#smile"/></svg></button><button aria-label="反馈二"><svg><use href="#smile"/></svg></button>
</div>

<main class="work">
  <aside class="side">
    <div class="side-tabs">
      <button class="on" aria-label="模型树"><svg class="ic-nodes"><use href="#nodes"/></svg></button><button aria-label="文件夹"><svg><use href="#layers"/></svg></button><button aria-label="收藏夹"><svg><use href="#star"/></svg></button>
    </div>
    <div class="panel">
      <div class="panel-head">
        <h2>模型树</h2>
        <button aria-label="设置"><svg><use href="#tools"/></svg><i class="caret"></i></button>
        <button aria-label="显示"><svg><use href="#list"/></svg><i class="caret"></i></button>
        <button aria-label="过滤"><svg><use href="#nodesoff"/></svg></button>
      </div>
      <ul class="tree">
        <li class="root"><svg><use href="#part"/></svg>PRT0001.PRT</li>
        <li><svg><use href="#plane"/></svg>RIGHT</li>
        <li><svg><use href="#plane"/></svg>TOP</li>
        <li><svg><use href="#plane"/></svg>FRONT</li>
        <li><svg><use href="#csys"/></svg>PRT_CSYS_DEF</li>
        <li class="kids"><svg><use href="#extrude"/></svg>拉伸 1</li>
        <li class="hid"><svg><use href="#sketchhid"/></svg>草绘 1</li>
        <li class="kids"><svg><use href="#patt"/></svg>阵列 1 / 扫描 1</li>
        <li><svg><use href="#trim"/></svg>修剪 1</li>
        <li><svg><use href="#trim"/></svg>修剪 2</li>
        <li><svg><use href="#trim"/></svg>修剪 3</li>
        <li><svg><use href="#trim"/></svg>修剪 4</li>
        <li><svg><use href="#trim"/></svg>修剪 5</li>
        <li><svg><use href="#merge"/></svg>合并 1</li>
        <li><svg><use href="#merge"/></svg>合并 2</li>
        <li><svg><use href="#merge"/></svg>合并 3</li>
        <li><svg><use href="#merge"/></svg>合并 4</li>
        <li><svg><use href="#trim"/></svg>修剪 6</li>
        <li class="kids"><svg><use href="#extrude"/></svg>拉伸 2</li>
        <li><svg><use href="#merge"/></svg>合并 5</li>
        <li><svg><use href="#round"/></svg>倒圆角 1</li>
        <li><svg><use href="#round"/></svg>倒圆角 2</li>
        <li><svg><use href="#round"/></svg>倒圆角 3</li>
        <li class="kids"><svg><use href="#extrude"/></svg>拉伸 3</li>
        <li><svg><use href="#thick"/></svg>加厚 1</li>
        <li class="kids"><svg><use href="#extrude"/></svg>拉伸 4</li>
        <li><svg><use href="#solid"/></svg>实体化 1</li>
        <li><svg><use href="#insert"/></svg>在此插入</li>
      </ul>
    </div>
  </aside>

  <section class="canvas">
    <div class="viewbar">
      <button aria-label="重新调整"><svg><use href="#zoomfit"/></svg></button><button aria-label="放大"><svg><use href="#zoomin"/></svg></button><button aria-label="缩小"><svg><use href="#zoomout"/></svg></button><button aria-label="重画"><svg><use href="#repaint"/></svg></button><button class="more" aria-label="显示样式"><svg><use href="#shade"/></svg></button><button class="more" aria-label="已保存方向"><svg><use href="#views"/></svg></button><button aria-label="视图管理器"><svg><use href="#camera"/></svg></button><button aria-label="透视图"><svg><use href="#persp"/></svg></button><button aria-label="正交"><svg><use href="#ortho"/></svg></button><button class="more" aria-label="基准显示"><svg><use href="#datum"/></svg></button><button aria-label="平面显示"><svg><use href="#planeeye"/></svg></button><button aria-label="轴显示"><svg><use href="#axiseye"/></svg></button><button aria-label="点显示"><svg><use href="#pointseye"/></svg></button><button aria-label="坐标系显示"><svg><use href="#csyseye"/></svg></button><button aria-label="注释显示"><svg><use href="#noteeye"/></svg></button><button aria-label="旋转中心"><svg><use href="#spin"/></svg></button>
    </div>

    <div class="model">
      <svg viewBox="0 0 400 420">
        <defs>
          <linearGradient id="fillet" x1=".12" y1=".12" x2=".88" y2=".88"><stop offset="0" stop-color="#a3adb9"/><stop offset=".45" stop-color="#8b929d"/><stop offset=".75" stop-color="#7b828a"/><stop offset="1" stop-color="#666c73"/></linearGradient>
          <linearGradient id="groove" x1=".12" y1=".12" x2=".88" y2=".88"><stop offset="0" stop-color="#6b737b" stop-opacity=".6"/><stop offset=".5" stop-color="#4a4f55" stop-opacity=".8"/><stop offset="1" stop-color="#383b3f"/></linearGradient>
          <linearGradient id="deep" x1=".2" y1=".2" x2=".8" y2=".8"><stop offset=".3" stop-color="#383b3f" stop-opacity="0"/><stop offset=".75" stop-color="#383b3f"/></linearGradient>
          <linearGradient id="shine" x1=".14" y1=".14" x2=".3" y2=".3"><stop offset="0" stop-color="#eef7ff"/><stop offset=".3" stop-color="#dfe9f3"/><stop offset="1" stop-color="#a6b0bb" stop-opacity="0"/></linearGradient>
          <filter id="soft"><feGaussianBlur stdDeviation="1.500"/></filter>
        </defs>
        <circle cx="215.750" cy="210.300" r="121.500" fill="none" stroke="url(#fillet)" stroke-width="12"/>
        <circle cx="215.750" cy="210.300" r="125.500" fill="none" stroke="url(#deep)" stroke-width="8" filter="url(#soft)"/>
        <circle cx="215.750" cy="210.300" r="126.500" fill="none" stroke="url(#groove)" stroke-width="1.500"/>
        <circle cx="215.750" cy="210.300" r="102" fill="none" stroke="#8a929b" stroke-width="30"/>
        <circle cx="215.750" cy="210.300" r="118.500" fill="none" stroke="url(#shine)" stroke-width="2.500"/>
      </svg>
    </div>

    <div class="mark">
      <svg viewBox="0 0 58 58"><g fill="none"><ellipse cx="23" cy="20" rx="22" ry="13" transform="rotate(42 23 20)" stroke="#52789f" stroke-width="3"/><path d="M29 46Q34 58 44 51T56 24q-3-6-13-1" stroke="#a35680" stroke-width="3.500"/><path d="M28 32q-14-2-18 7 2 10 13 6 14-8 19-20" stroke="#7390b4" stroke-width="2"/></g></svg>
      <div><strong>野火论坛</strong><span>www.proewildfire.cn</span></div>
    </div>
  </section>
</main>
</body>
</html>
```
FILE: styles.css
```css
* { box-sizing: border-box; }
html, body { height: 100%; }
body {
  margin: 0;
  display: flex;
  flex-direction: column;
  overflow: hidden;
  background: #fbfbfb;
  color: #333;
  font: 12px/16px "Noto Sans", "Noto Sans CJK SC", sans-serif;
}
button { margin: 0; padding: 0; border: 0; background: none; color: inherit; font: inherit; }
svg { flex: none; width: 16px; height: 16px; }
.sprite { position: absolute; width: 0; height: 0; }

.caret {
  flex: none;
  border: 4px solid transparent;
  border-top-color: #7b7b7b;
  border-bottom: 0;
}
.off .caret { border-top-color: #b5b5b5; }

/* title bar */
.titlebar { flex: none; display: flex; height: 36px; padding: 2px 35px 0 9px; }
.app-icon { margin-top: 4px; }
.title-sep { width: 1px; height: 24px; margin-left: 4px; background: #dcdcdc; }
.titlebar h1 {
  margin: 3px 0 0 auto;
  font: bold 13px/18px "Liberation Mono", "Noto Sans CJK SC", monospace;
  color: #1d1d1d;
  white-space: pre;
}

/* ribbon tabs */
.tabs { flex: none; display: flex; align-items: flex-end; height: 24px; padding-left: 2px; border-bottom: 1px solid #c5c9cc; }
.tab {
  display: flex;
  align-items: center;
  height: 20px;
  padding: 0 11px 2px;
  border: 1px solid #c5c9cc;
  border-width: 1px 1px 0 0;
  background: #eef0f2;
  color: #777;
  font: bold 15px/18px "Noto Sans CJK SC", sans-serif;
  white-space: nowrap;
}
.latin { font: bold 13px/18px "Liberation Mono", monospace; }
.tab.file { gap: 3px; margin-right: 7px; padding: 0 5px 2px 7px; border-left-width: 1px; }
.tab.active { height: 24px; margin-bottom: -1px; border-left-width: 1px; background: #fbfbfb; color: #333; }

/* ribbon */
.ribbon { flex: none; display: flex; padding-left: 2px; border-bottom: 1px solid #c5c9cc; }
.group { flex: none; display: flex; flex-direction: column; border-right: 1px solid #d5d8da; }
.group.rest { flex: 1; border-right: 0; }
.g-ops { width: 129px; border-left: 1px solid #d5d8da; }
.g-data { width: 107px; }
.g-datum { width: 151px; }
.g-shape { width: 123px; }
.g-eng { width: 215px; }
.g-edit { width: 215px; }
.g-surf { width: 111px; }
.g-intent { width: 87px; }
.g-rare { width: 73px; }
.g-close { width: 47px; }
.body { display: flex; height: 77px; padding-top: 3px; }
.body.lead { padding-left: 7px; }
.body.center { justify-content: center; }
.col { display: flex; flex-direction: column; align-items: flex-start; }
.col + .col { margin-left: 8px; }
.big + .col { margin-left: 3px; }
.col + .big { margin-left: 2px; }
.cmd { display: flex; align-items: center; gap: 3px; height: 24px; white-space: nowrap; }
.cmd .caret { margin-left: 5px; }
.cmd.off { color: #a0a0a0; }
.big { display: flex; flex-direction: column; align-items: center; width: 44px; padding-top: 3px; }
.big.wide { width: 59px; }
.big.slim { width: 38px; }
.big svg { width: 32px; height: 32px; }
.big span { margin-top: 9px; line-height: 13px; }
.big .caret { margin-top: 4px; }
.foot {
  display: flex;
  align-items: center;
  justify-content: center;
  gap: 4px;
  width: 100%;
  height: 22px;
  border-top: 1px solid #c5c9cc;
  background: #eef0f2;
}

/* quick access toolbar */
.quick { flex: none; display: flex; height: 24px; padding-left: 5px; overflow: hidden; }
.quick button { flex: none; display: flex; align-items: center; justify-content: center; width: 24px; }
.quick .drop { width: 14px; }

.work { flex: 1; display: flex; min-height: 0; }

/* navigator */
.side { flex: none; display: flex; flex-direction: column; width: 257px; padding: 13px 1px 0 1px; }
.side-tabs { display: flex; height: 30px; margin-bottom: -1px; }
.side-tabs button {
  display: flex;
  align-items: center;
  justify-content: center;
  width: 30px;
  border: 1px solid #c5c9cc;
  border-left-width: 0;
  background: #eef0f2;
}
.side-tabs button.on { border-left-width: 1px; border-bottom-color: #fbfbfb; background: #fbfbfb; }
.side-tabs svg { width: 22px; height: 22px; }
.side-tabs .ic-nodes { width: 16px; height: 22px; }
.panel { flex: 1; border: 1px solid #c5c9cc; border-right: 3px solid #c5c9cc; border-bottom: 0; }
.panel-head { display: flex; align-items: center; height: 29px; padding: 0 2px 0 20px; border-bottom: 1px solid #c5c9cc; }
.panel-head h2 { flex: 1; margin: 0; font-size: 13px; line-height: 18px; }
.panel-head button { display: flex; align-items: center; gap: 6px; margin-left: 6px; }
.panel-head button:last-child { margin-left: 12px; }
.panel-head svg { width: 22px; height: 22px; }
.tree { margin: 0; padding: 6px 0 0; list-style: none; }
.tree li { display: flex; align-items: center; gap: 9px; height: 24px; padding-left: 30px; color: #444; white-space: pre; }
.tree li.root { padding-left: 10px; }
.tree li.hid { color: #bbb; }
.tree li.kids { padding-left: 16px; }
.tree li.kids::before {
  content: "";
  width: 0;
  margin-right: -2px;
  border: 4px solid transparent;
  border-left: 7px solid #808080;
  border-right: 0;
  box-sizing: content-box;
}

/* graphics area */
.canvas {
  position: relative;
  flex: 1;
  background: linear-gradient(#c5daeb, #a6bfd9 32%, #7f9cc3 67%, #5e7eaa);
}
.viewbar {
  position: absolute;
  top: 7px;
  right: 29px;
  display: flex;
  height: 28px;
  padding: 0 4px;
  border: 1px solid #c5c9cc;
  background: #eef0f2;
}
.viewbar button {
  position: relative;
  display: flex;
  align-items: center;
  justify-content: center;
  width: 27px;
  border-right: 1px solid #c5c9cc;
  background: #fdfdfd;
}
.viewbar button:first-child { border-left: 1px solid #c5c9cc; }
.viewbar .more { width: 28px; }
.viewbar .more::after {
  content: "";
  position: absolute;
  right: 3px;
  bottom: 3px;
  border-left: 4px solid transparent;
  border-bottom: 4px solid #444;
}

/* shaded part: conic shading follows the lofted faces around the bore */
.model {
  position: absolute;
  left: 363px;
  top: 256px;
  width: 400px;
  height: 420px;
  clip-path: path(evenodd, "M167 6L374 73V87Q375 98 383 99L395 102V319L383 322Q372 325 373 333L374 348L167 414L162 403Q157 397 150 398L134 404L7 228L13 222Q22 211 13 198L7 192L134 17L145 23Q156 25 162 17ZM304.500 210.300A88.750 88.750 0 0 0 127 210.300A88.750 88.750 0 0 0 304.500 210.300Z");
  background:
    radial-gradient(circle at 366px 66px, rgba(45, 48, 52, .6), transparent 46px),
    radial-gradient(circle at 392px 325px, rgba(45, 48, 52, .6), transparent 68px),
    radial-gradient(circle at 124px 398px, rgba(45, 48, 52, .7), transparent 56px),
    radial-gradient(circle at 7px 186px, rgba(70, 76, 82, .45), transparent 34px),
    radial-gradient(circle at 128px 17px, rgba(70, 76, 82, .45), transparent 36px),
    conic-gradient(from 0deg at 216px 210px,
      #a9b4bd 0deg, #abb6c0 5deg, #9099a5 12deg, #868e97 20deg, #70777e 31deg,
      #5d6269 42deg, #4d5156 52deg, #6e7379 56deg, #7e858d 61deg, #808891 75deg,
      #7b838a 90deg, #62686f 105deg, #535860 115deg, #4b4f55 122deg, #565b62 129deg,
      #646a71 143deg, #6d747b 156deg, #767e85 168deg, #7b838a 180deg, #78808a 191deg,
      #6c7279 196deg, #4c5056 200deg, #5a6066 210deg, #6c737a 220deg, #7f8790 231deg,
      #919aa4 240deg, #9ca6b0 246deg, #959fa8 256deg, #959da6 265deg, #888f97 269deg,
      #656d73 273deg, #7a828a 279deg, #868d98 288deg, #8e97a2 296deg, #b4bfc9 301deg,
      #f0f8ff 305deg, #f2faff 309deg, #b4bfc9 314deg, #949eaa 318deg, #878f99 328deg,
      #7f8790 338deg, #8b949d 342deg, #99a3ac 347deg, #9ea8b1 356deg, #a9b4bd 360deg);
}
.model svg { display: block; width: 100%; height: 100%; }

.mark {
  position: absolute;
  right: 5px;
  bottom: 5px;
  display: flex;
  width: 206px;
  height: 62px;
  background: rgba(220, 228, 240, .5);
}
.mark svg { width: 58px; height: 58px; margin: 3px 0 0 1px; }
.mark div { display: flex; flex-direction: column; align-items: flex-end; flex: 1; padding-right: 4px; }
.mark strong { margin: 2px 16px 0 0; color: #3d918a; font: 700 29px/36px "Noto Sans CJK SC", sans-serif; }
.mark span { color: #6b9abb; font: 14px/20px "DejaVu Sans", sans-serif; white-space: nowrap; }
```
